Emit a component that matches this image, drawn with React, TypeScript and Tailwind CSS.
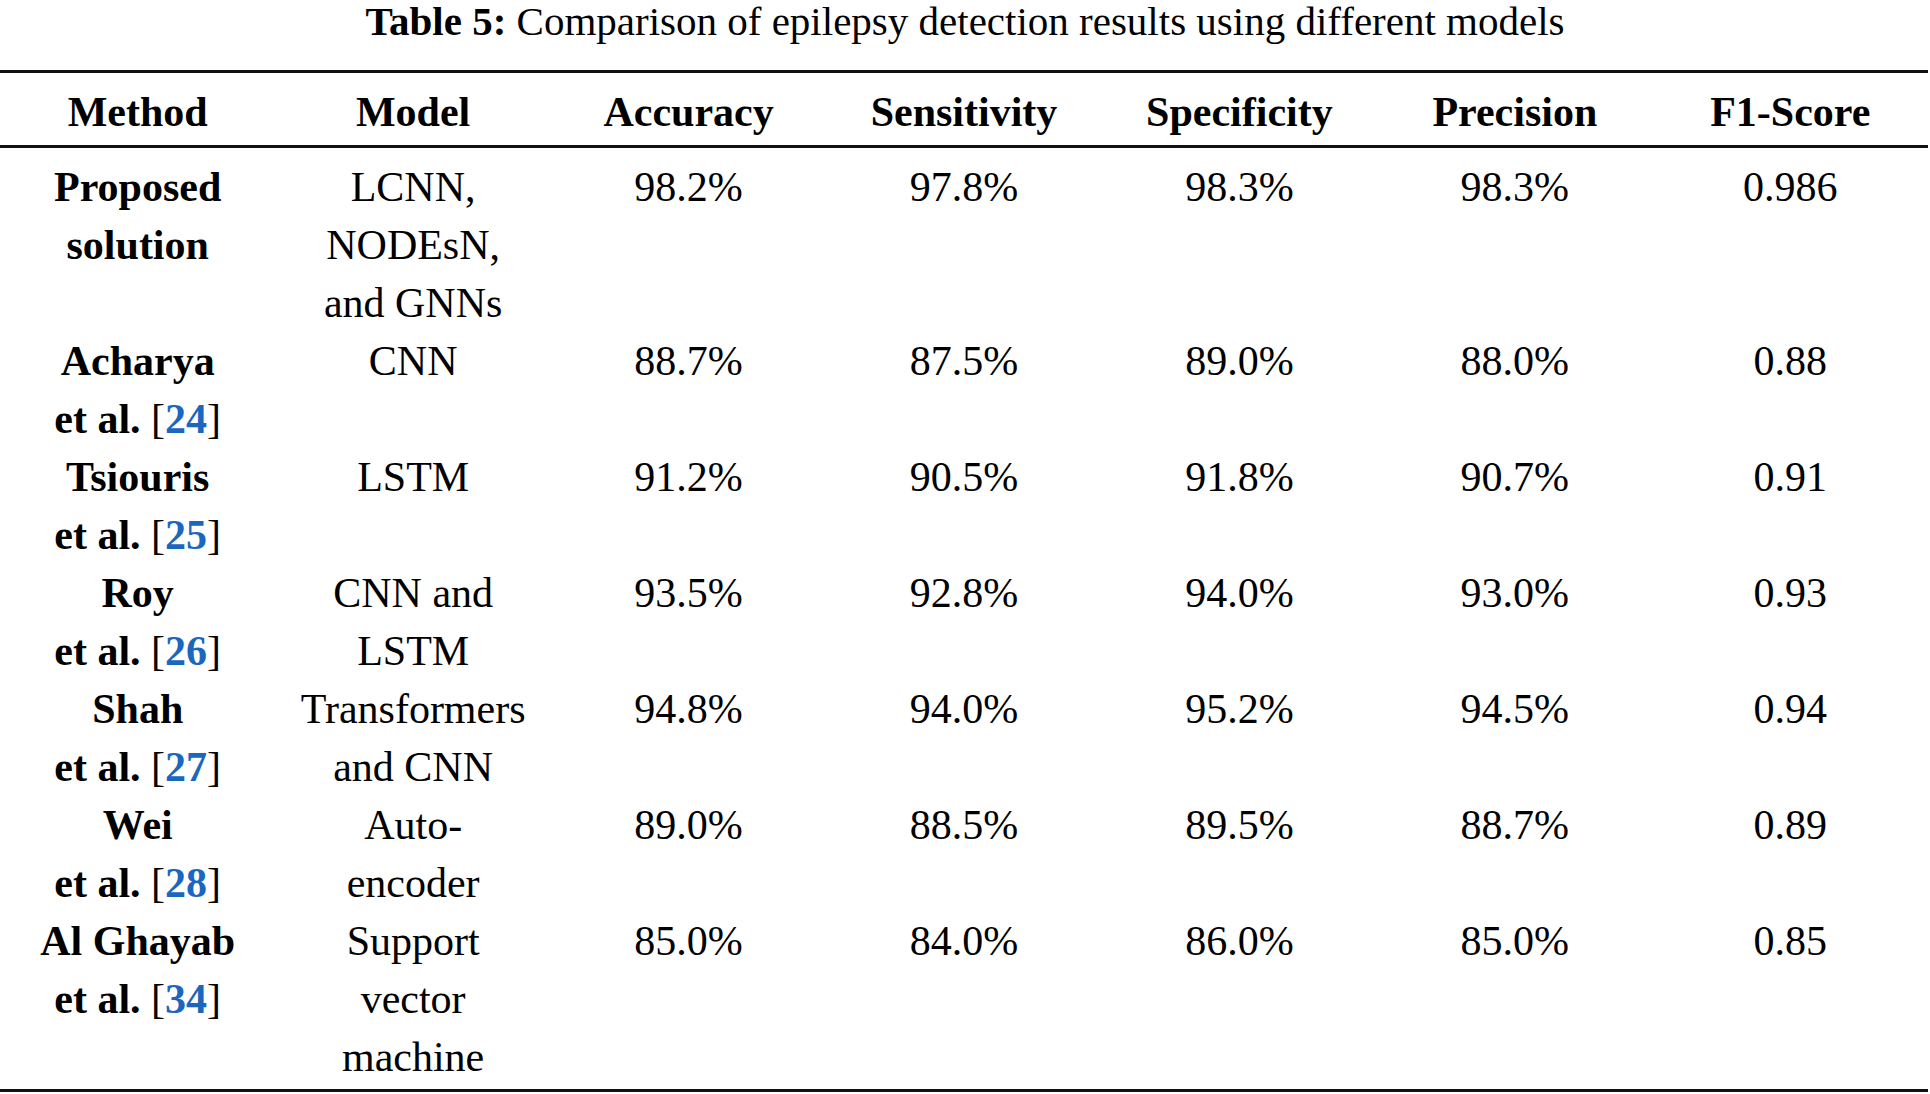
import React from 'react';

type Row = {
  name: string;
  refNo: string;
  model: string[];
  values: string[];
};

const headers = ['Method', 'Model', 'Accuracy', 'Sensitivity', 'Specificity', 'Precision', 'F1-Score'];

const rows: Row[] = [
  { name: 'Proposed', refNo: '', model: ['LCNN,', 'NODEsN,', 'and GNNs'], values: ['98.2%', '97.8%', '98.3%', '98.3%', '0.986'] },
  { name: 'Acharya', refNo: '24', model: ['CNN'], values: ['88.7%', '87.5%', '89.0%', '88.0%', '0.88'] },
  { name: 'Tsiouris', refNo: '25', model: ['LSTM'], values: ['91.2%', '90.5%', '91.8%', '90.7%', '0.91'] },
  { name: 'Roy', refNo: '26', model: ['CNN and', 'LSTM'], values: ['93.5%', '92.8%', '94.0%', '93.0%', '0.93'] },
  { name: 'Shah', refNo: '27', model: ['Transformers', 'and CNN'], values: ['94.8%', '94.0%', '95.2%', '94.5%', '0.94'] },
  { name: 'Wei', refNo: '28', model: ['Auto-', 'encoder'], values: ['89.0%', '88.5%', '89.5%', '88.7%', '0.89'] },
  { name: 'Al Ghayab', refNo: '34', model: ['Support', 'vector', 'machine'], values: ['85.0%', '84.0%', '86.0%', '85.0%', '0.85'] },
];

function MethodCell({ row }: { row: Row }) {
  return (
    <div className="flex flex-col items-center font-bold">
      <span>{row.name}</span>
      {row.refNo ? (
        <span>
          et al. <span className="font-normal">[</span>
          <span className="text-[#1b66bf]">{row.refNo}</span>
          <span className="font-normal">]</span>
        </span>
      ) : (
        <span>solution</span>
      )}
    </div>
  );
}

export default function App() {
  return (
    <div className="w-[1930px] min-h-[1094px] bg-white text-black font-['Liberation_Serif',serif]">
      <p className="text-center text-[41px] leading-[42px]">
        <span className="font-bold">Table 5:</span> Comparison of epilepsy detection results using different models
      </p>

      <div className="mt-[28px] w-[1928px] border-t-[3px] border-[#111]">
        {/* header */}
        <div className="grid grid-cols-7 border-b-[3px] border-[#111] pt-[10px] pb-[4px] text-[42px] leading-[58px] font-bold">
          {headers.map((h) => (
            <div key={h} className="text-center">{h}</div>
          ))}
        </div>

        {/* body */}
        <div className="border-b-[3px] border-[#111] pt-[10px] pb-[3px] text-[42px] leading-[58px]">
          {rows.map((row) => (
            <div key={row.name} className="grid grid-cols-7">
              <MethodCell row={row} />
              <div className="flex flex-col items-center">
                {row.model.map((m) => (
                  <span key={m}>{m}</span>
                ))}
              </div>
              {row.values.map((v, i) => (
                <div key={i} className="text-center">{v}</div>
              ))}
            </div>
          ))}
        </div>
      </div>
    </div>
  );
}
